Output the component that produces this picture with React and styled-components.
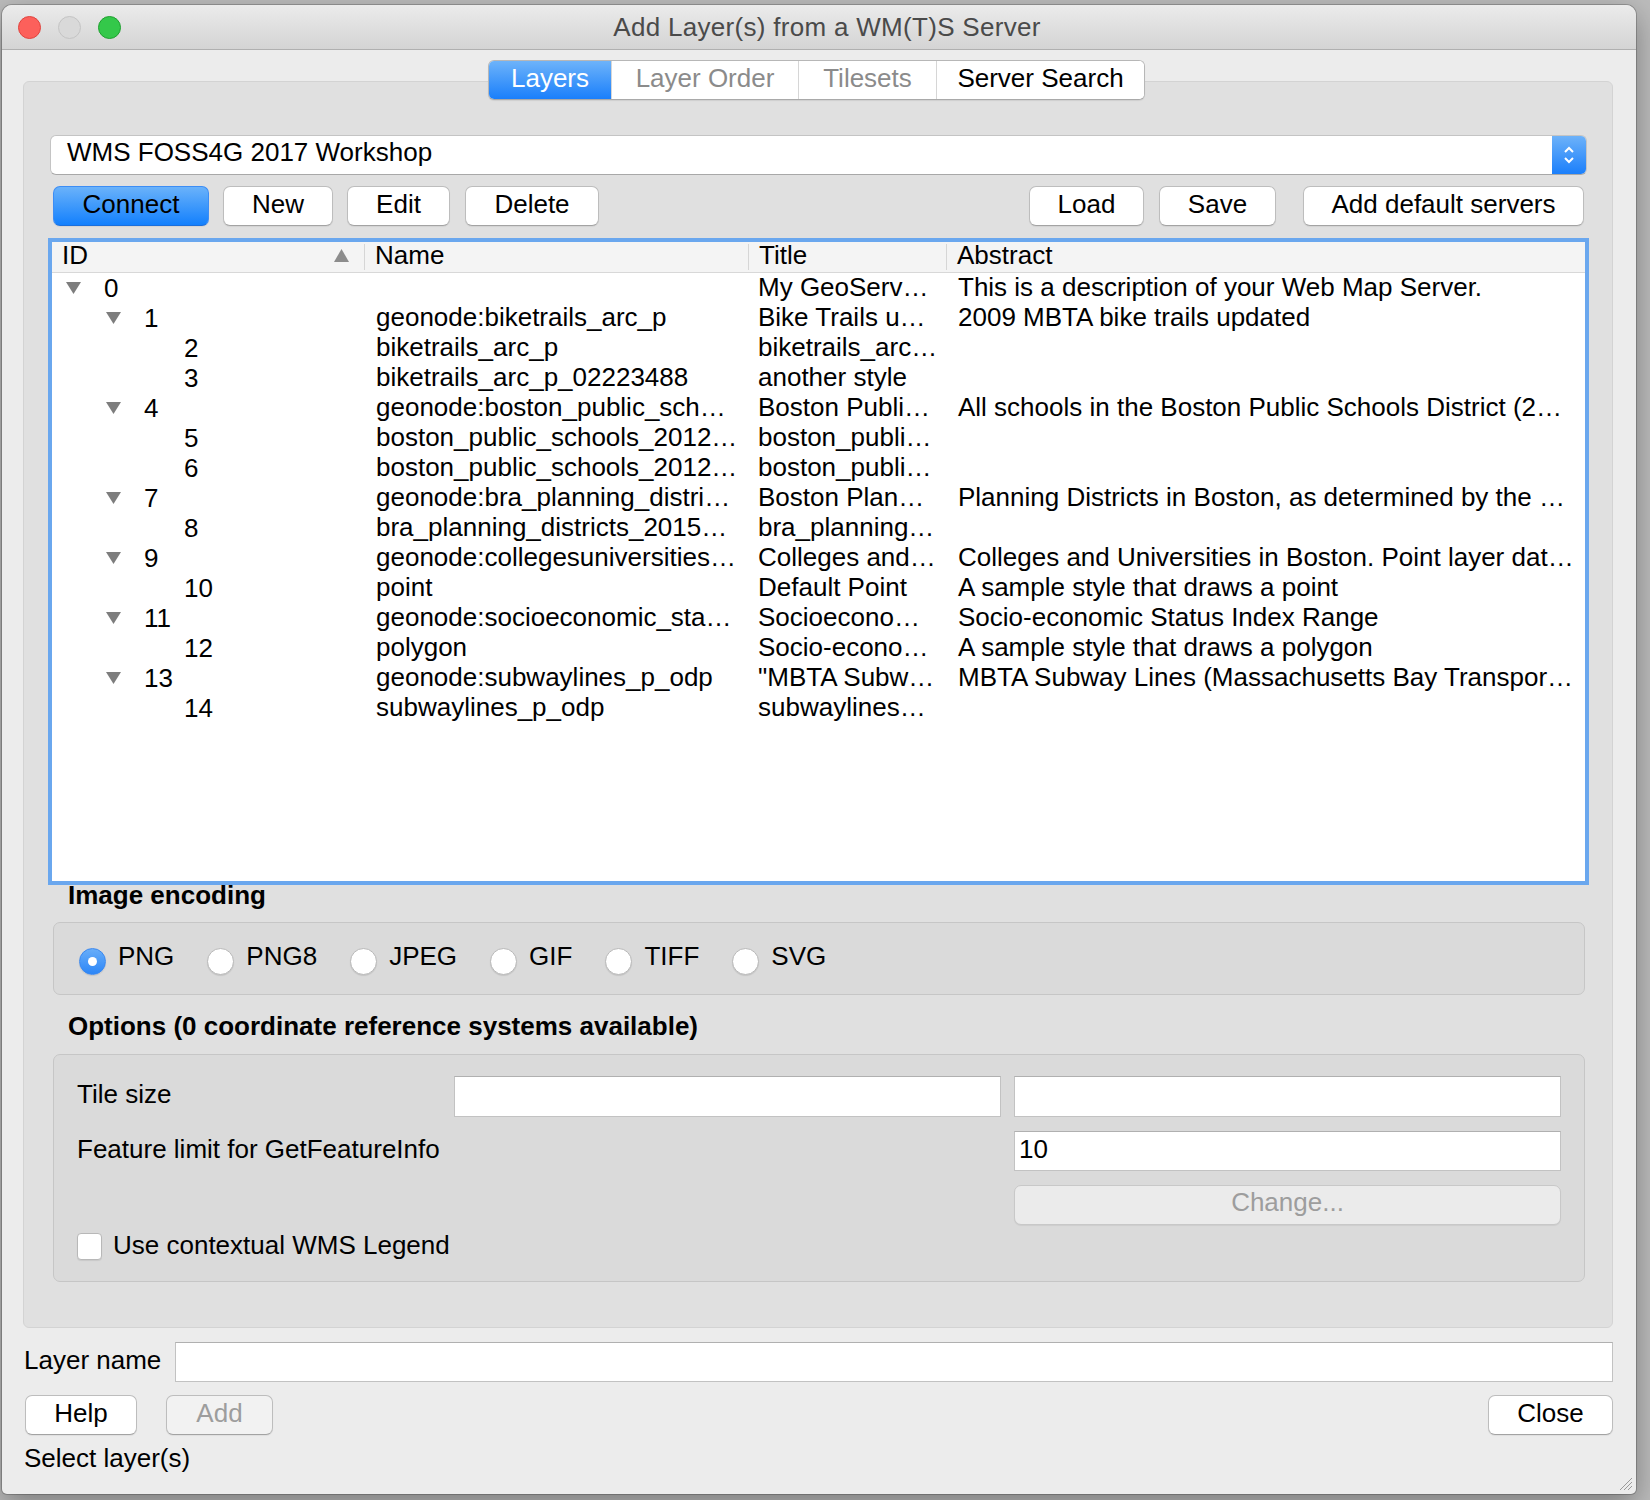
import styled, { createGlobalStyle } from "styled-components";

const GlobalStyle = createGlobalStyle`
  html, body {
    margin: 0;
    padding: 0;
    background: #bcbcbc;
  }
  body {
    font-family: "Liberation Sans", Arial, sans-serif;
    font-size: 26px;
    color: #000;
  }
  * {
    box-sizing: border-box;
  }
`;

const Desktop = styled.div`
  width: 1650px;
  height: 1500px;
  padding: 5px 0 0 2px;
  overflow: hidden;
`;

const Window = styled.div`
  position: relative;
  width: 1634px;
  height: 1489px;
  background: #ececec;
  border-radius: 10px 10px 5px 5px;
  box-shadow: 0 0 0 1px rgba(0, 0, 0, 0.2), 0 10px 30px rgba(0, 0, 0, 0.35);
  display: flex;
  flex-direction: column;
  overflow: hidden;
`;

const TitleBar = styled.div`
  height: 45px;
  flex-shrink: 0;
  display: grid;
  grid-template-columns: 1fr auto 1fr;
  align-items: center;
  padding-left: 16px;
  background: linear-gradient(#ebebeb, #d4d4d4);
  border-bottom: 1px solid #b0b0b0;
`;

const Lights = styled.div`
  display: flex;
  gap: 17px;
`;

const Light = styled.span`
  width: 23px;
  height: 23px;
  border-radius: 50%;
  background: ${({ $color }) => $color};
  border: 1px solid ${({ $edge }) => $edge};
`;

const WindowTitle = styled.div`
  font-size: 26px;
  color: #4a4a4a;
  line-height: 30px;
  letter-spacing: 0.3px;
`;

const Body = styled.div`
  flex: 1;
  display: flex;
  flex-direction: column;
  padding: 0 23px 0 21px;
`;

const TabWidget = styled.div`
  margin-top: 10px;
  display: flex;
  flex-direction: column;
  align-items: center;
`;

const TabBar = styled.div`
  position: relative;
  z-index: 1;
  display: flex;
  height: 40px;
  margin-left: -3px;
  border: 1px solid #b7b7b7;
  border-bottom-color: #a9a9a9;
  border-radius: 6px;
  background: #fff;
  overflow: hidden;
  box-shadow: 0 1px 1px rgba(0, 0, 0, 0.08);
`;

const Tab = styled.div`
  display: flex;
  align-items: center;
  justify-content: center;
  padding-bottom: 3px;
  width: ${({ $w }) => $w}px;
  font-size: 26px;
  color: ${({ $active, $muted }) =>
    $active ? "#fff" : $muted ? "#8b8b8b" : "#000"};
  background: ${({ $active }) =>
    $active ? "linear-gradient(#6db3fa, #1a7ffb)" : "#fff"};
  border-left: ${({ $first }) => ($first ? "none" : "1px solid #d6d6d6")};
`;

const Panel = styled.div`
  align-self: stretch;
  margin-top: -19px;
  height: 1247px;
  background: #e0e0e0;
  border: 1px solid #d3d3d3;
  border-radius: 6px;
  padding: 53px 23px 0 24px;
  display: flex;
  flex-direction: column;
`;

const Combo = styled.div`
  height: 40px;
  margin: 0 2px 0 2px;
  display: flex;
  background: #fff;
  border: 1px solid #c4c4c4;
  border-bottom-color: #a8a8a8;
  border-radius: 6px;
  overflow: hidden;
`;

const ComboText = styled.div`
  flex: 1;
  padding-left: 16px;
  line-height: 32px;
  font-size: 26px;
`;

const Stepper = styled.div`
  width: 34px;
  background: linear-gradient(#6db2f9, #1b7ffb);
  display: flex;
  align-items: center;
  justify-content: center;
`;

const ButtonRow = styled.div`
  margin-top: 11px;
  height: 40px;
  display: flex;
  padding: 0 5px;
  gap: 14px;
`;

const Spacer = styled.div`
  flex: 1;
`;

const Button = styled.div`
  height: 40px;
  width: ${({ $w }) => ($w ? `${$w}px` : "auto")};
  padding: 0 0 4px;
  margin-left: ${({ $ml }) => $ml ?? 0}px;
  display: flex;
  align-items: center;
  justify-content: center;
  font-size: 26px;
  border-radius: 7px;
  border: 1px solid ${({ $primary }) => ($primary ? "#3c8df5" : "#bdbdbd")};
  border-bottom-color: ${({ $primary }) => ($primary ? "#1b6fdc" : "#a3a3a3")};
  color: ${({ $disabled }) => ($disabled ? "#9d9d9d" : "#000")};
  background: ${({ $primary, $disabled }) =>
    $primary
      ? "linear-gradient(#6ab2fa, #1380fd)"
      : $disabled
      ? "#f2f2f2"
      : "#fff"};
  box-shadow: 0 1px 1px rgba(0, 0, 0, 0.06);
  white-space: nowrap;
`;

const ChangeButton = styled(Button)`
  grid-column: 3;
  background: #ebebeb;
  border-color: #c8c8c8;
  padding-bottom: 6px;
`;

const Tree = styled.div`
  margin-top: 12px;
  height: 647px;
  border: 4px solid #6aa7ee;
  background: #fff;
  display: flex;
  flex-direction: column;
`;

const columns = "312px 384px 198px 1fr";

const HeaderRow = styled.div`
  display: grid;
  grid-template-columns: ${columns};
  height: 31px;
  background: #f4f4f4;
  border-bottom: 1px solid #d8d8d8;
`;

const HeaderCell = styled.div`
  display: flex;
  align-items: flex-start;
  justify-content: space-between;
  padding: 0 14px 0 10px;
  margin: 2px 0 2px;
  font-size: 26px;
  line-height: 22px;
  border-left: ${({ $first }) => ($first ? "none" : "1px solid #d6d6d6")};

  svg {
    margin-top: 4px;
  }
`;

const Row = styled.div`
  display: grid;
  grid-template-columns: ${columns};
  height: 30px;
  line-height: 28px;
  font-size: 26px;
`;

const Cell = styled.div`
  padding-left: ${({ $pl }) => $pl ?? 11}px;
  white-space: nowrap;
  overflow: hidden;
`;

const IdCell = styled.div`
  display: flex;
  align-items: center;
  padding-left: ${({ $level }) => 13 + $level * 40}px;
`;

const Twisty = styled.span`
  width: 17px;
  margin-right: 22px;
  display: flex;
  align-items: center;
`;

const SectionLabel = styled.div`
  margin-top: ${({ $mt }) => $mt}px;
  padding-left: 20px;
  height: 24px;
  line-height: 20px;
  font-size: 26px;
  font-weight: bold;
`;

const GroupBox = styled.div`
  margin: ${({ $mt }) => $mt}px 4px 0 5px;
  height: ${({ $h }) => $h}px;
  background: #dadada;
  border: 1px solid #c6c6c6;
  border-radius: 7px;
`;

const RadioRow = styled.div`
  height: 100%;
  display: flex;
  align-items: center;
  padding-left: 25px;
  gap: 33px;
`;

const RadioItem = styled.div`
  display: flex;
  align-items: center;
  gap: 12px;
  font-size: 26px;
  padding-bottom: 4px;
`;

const Radio = styled.span`
  width: 27px;
  height: 27px;
  margin-top: 10px;
  border-radius: 50%;
  display: flex;
  align-items: center;
  justify-content: center;
  background: ${({ $on }) => ($on ? "linear-gradient(#67adf9, #2c86f7)" : "#fff")};
  border: 1px solid ${({ $on }) => ($on ? "#3b88ef" : "#b9b9b9")};
  box-shadow: 0 1px 1px rgba(0, 0, 0, 0.1);

  &::after {
    content: "";
    display: ${({ $on }) => ($on ? "block" : "none")};
    width: 9px;
    height: 9px;
    border-radius: 50%;
    background: #fff;
  }
`;

const OptionsGrid = styled.div`
  display: grid;
  grid-template-columns: 1fr 547px 547px;
  grid-template-rows: 41px 40px 40px;
  column-gap: 13px;
  row-gap: 14px;
  align-items: center;
  padding: 21px 23px 0 23px;
`;

const OptionLabel = styled.div`
  font-size: 26px;
  padding-bottom: 4px;
  grid-column: ${({ $span }) => $span ?? "auto"};
`;

const TextField = styled.div`
  height: ${({ $h }) => $h ?? 40}px;
  align-self: stretch;
  background: #fff;
  border: 1px solid #c2c2c2;
  border-top-color: #b0b0b0;
  padding-left: 4px;
  font-size: 26px;
  line-height: 34px;
  grid-column: ${({ $col }) => $col ?? "auto"};
  flex: ${({ $grow }) => ($grow ? 1 : "none")};
`;

const CheckRow = styled.div`
  display: flex;
  align-items: center;
  gap: 11px;
  padding-left: 23px;
  margin-top: 4px;
  font-size: 26px;
  line-height: 24px;
`;

const CheckBox = styled.span`
  width: 25px;
  height: 27px;
  margin-top: 4px;
  background: #fff;
  border: 1px solid #b8b8b8;
  border-radius: 4px;
  box-shadow: 0 1px 1px rgba(0, 0, 0, 0.08);
`;

const LayerRow = styled.div`
  margin-top: 14px;
  height: 40px;
  display: flex;
  align-items: center;
  gap: 14px;
  padding-left: 1px;
  font-size: 26px;
`;

const LayerLabel = styled.span`
  padding-bottom: 4px;
`;

const FooterRow = styled.div`
  margin-top: 13px;
  height: 40px;
  display: flex;
  padding-left: 2px;
  gap: 29px;
`;

const Status = styled.div`
  margin-top: 8px;
  padding-left: 1px;
  line-height: 30px;
  font-size: 26px;
`;

const Grip = styled.svg`
  position: absolute;
  right: 3px;
  bottom: 3px;
`;

const layers = [
  { id: 0, level: 0, open: true, name: "", title: "My GeoServ…", abstract: "This is a description of your Web Map Server." },
  { id: 1, level: 1, open: true, name: "geonode:biketrails_arc_p", title: "Bike Trails u…", abstract: "2009 MBTA bike trails updated" },
  { id: 2, level: 2, name: "biketrails_arc_p", title: "biketrails_arc…" },
  { id: 3, level: 2, name: "biketrails_arc_p_02223488", title: "another style" },
  { id: 4, level: 1, open: true, name: "geonode:boston_public_sch…", title: "Boston Publi…", abstract: "All schools in the Boston Public Schools District (2…" },
  { id: 5, level: 2, name: "boston_public_schools_2012…", title: "boston_publi…" },
  { id: 6, level: 2, name: "boston_public_schools_2012…", title: "boston_publi…" },
  { id: 7, level: 1, open: true, name: "geonode:bra_planning_distri…", title: "Boston Plan…", abstract: "Planning Districts in Boston, as determined by the …" },
  { id: 8, level: 2, name: "bra_planning_districts_2015…", title: "bra_planning…" },
  { id: 9, level: 1, open: true, name: "geonode:collegesuniversities…", title: "Colleges and…", abstract: "Colleges and Universities in Boston. Point layer dat…" },
  { id: 10, level: 2, name: "point", title: "Default Point", abstract: "A sample style that draws a point" },
  { id: 11, level: 1, open: true, name: "geonode:socioeconomic_sta…", title: "Socioecono…", abstract: "Socio-economic Status Index Range" },
  { id: 12, level: 2, name: "polygon", title: "Socio-econo…", abstract: "A sample style that draws a polygon" },
  { id: 13, level: 1, open: true, name: "geonode:subwaylines_p_odp", title: "\"MBTA Subw…", abstract: "MBTA Subway Lines (Massachusetts Bay Transpor…" },
  { id: 14, level: 2, name: "subwaylines_p_odp", title: "subwaylines…" },
];

const encodings = ["PNG", "PNG8", "JPEG", "GIF", "TIFF", "SVG"];

const Triangle = () => (
  <svg width="17" height="14" viewBox="0 0 17 14">
    <polygon points="1,1 16,1 8.5,13" fill="#7d7d7d" />
  </svg>
);

const SortArrow = () => (
  <svg width="17" height="15" viewBox="0 0 17 15">
    <polygon points="8.5,1 16,14 1,14" fill="#8c8c8c" />
  </svg>
);

const App = () => {
  return (
    <>
      <GlobalStyle />
      <Desktop>
        <Window>
          <TitleBar>
            <Lights>
              <Light $color="#fc605b" $edge="#e0443e" />
              <Light $color="#d9d9d9" $edge="#c4c4c4" />
              <Light $color="#34c84a" $edge="#20a030" />
            </Lights>
            <WindowTitle>Add Layer(s) from a WM(T)S Server</WindowTitle>
            <div />
          </TitleBar>

          <Body>
            <TabWidget>
              <TabBar>
                <Tab $first $active $w={122}>Layers</Tab>
                <Tab $muted $w={187}>Layer Order</Tab>
                <Tab $muted $w={138}>Tilesets</Tab>
                <Tab $w={208}>Server Search</Tab>
              </TabBar>

              <Panel>
                <Combo>
                  <ComboText>WMS FOSS4G 2017 Workshop</ComboText>
                  <Stepper>
                    <svg width="14" height="24" viewBox="0 0 14 24">
                      <polyline points="3,9 7,5 11,9" fill="none" stroke="#fff" strokeWidth="2" />
                      <polyline points="3,15 7,19 11,15" fill="none" stroke="#fff" strokeWidth="2" />
                    </svg>
                  </Stepper>
                </Combo>

                <ButtonRow>
                  <Button $primary $w={156}>Connect</Button>
                  <Button $w={110}>New</Button>
                  <Button $w={103}>Edit</Button>
                  <Button $w={134} $ml={1}>Delete</Button>
                  <Spacer />
                  <Button $w={115}>Load</Button>
                  <Button $w={117} $ml={1}>Save</Button>
                  <Button $w={281} $ml={13}>Add default servers</Button>
                </ButtonRow>

                <Tree>
                  <HeaderRow>
                    <HeaderCell $first>
                      <span>ID</span>
                      <SortArrow />
                    </HeaderCell>
                    <HeaderCell>Name</HeaderCell>
                    <HeaderCell>Title</HeaderCell>
                    <HeaderCell>Abstract</HeaderCell>
                  </HeaderRow>
                  {layers.map((l) => (
                    <Row key={l.id}>
                      <IdCell $level={l.level}>
                        <Twisty>{l.open && <Triangle />}</Twisty>
                        {l.id}
                      </IdCell>
                      <Cell $pl={12}>{l.name}</Cell>
                      <Cell $pl={10}>{l.title}</Cell>
                      <Cell $pl={12}>{l.abstract}</Cell>
                    </Row>
                  ))}
                </Tree>

                <SectionLabel $mt={0}>Image encoding</SectionLabel>
                <GroupBox $mt={13} $h={73}>
                  <RadioRow>
                    {encodings.map((e, i) => (
                      <RadioItem key={e}>
                        <Radio $on={i === 0} />
                        {e}
                      </RadioItem>
                    ))}
                  </RadioRow>
                </GroupBox>

                <SectionLabel $mt={21}>
                  Options (0 coordinate reference systems available)
                </SectionLabel>
                <GroupBox $mt={14} $h={228}>
                  <OptionsGrid>
                    <OptionLabel>Tile size</OptionLabel>
                    <TextField $h={41} />
                    <TextField $h={41} />
                    <OptionLabel $span="1 / 3">
                      Feature limit for GetFeatureInfo
                    </OptionLabel>
                    <TextField $col="3">10</TextField>
                    <ChangeButton $disabled>Change...</ChangeButton>
                  </OptionsGrid>
                  <CheckRow>
                    <CheckBox />
                    Use contextual WMS Legend
                  </CheckRow>
                </GroupBox>
              </Panel>
            </TabWidget>

            <LayerRow>
              <LayerLabel>Layer name</LayerLabel>
              <TextField $grow />
            </LayerRow>

            <FooterRow>
              <Button $w={112}>Help</Button>
              <Button $w={107} $disabled>Add</Button>
              <Spacer />
              <Button $w={125}>Close</Button>
            </FooterRow>

            <Status>Select layer(s)</Status>
          </Body>

          <Grip width="16" height="16" viewBox="0 0 16 16">
            <line x1="15" y1="3" x2="3" y2="15" stroke="#9a9a9a" strokeWidth="1" />
            <line x1="15" y1="7" x2="7" y2="15" stroke="#9a9a9a" strokeWidth="1" />
            <line x1="15" y1="11" x2="11" y2="15" stroke="#9a9a9a" strokeWidth="1" />
          </Grip>
        </Window>
      </Desktop>
    </>
  );
};

export default App;
